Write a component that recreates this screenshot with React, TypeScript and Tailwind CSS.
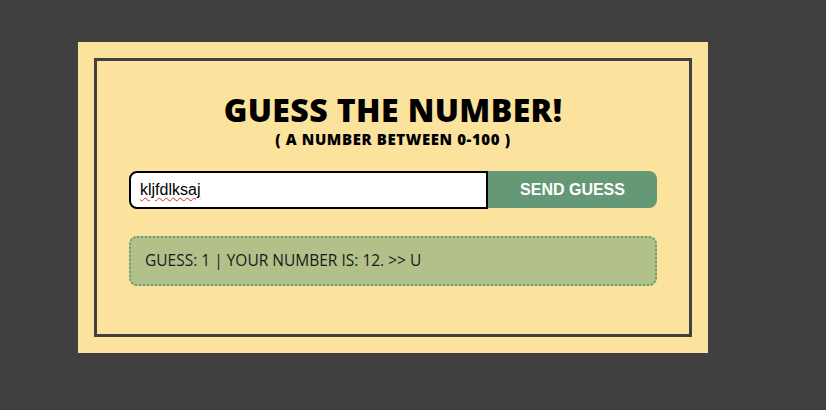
import React from "react";

export default function App() {
  return (
    <div className="min-h-[410px] w-full bg-[#404040] pt-[42px] pl-[78px] font-['Open_Sans',sans-serif]">
      <div className="w-[630px] h-[311px] bg-[#fce39d] p-[16px]">
        <div className="h-full border-[3px] border-[#404040] px-[32px] pt-[30px]">
          <h1 className="text-center text-[32px] leading-[38px] font-extrabold text-black tracking-[0.4px]">
            GUESS THE NUMBER!
          </h1>
          <p className="text-center text-[15px] leading-[20px] font-extrabold text-black tracking-[0.6px]">
            ( A NUMBER BETWEEN 0-100 )
          </p>
          <div className="mt-[22px] flex h-[38px]">
            <div className="w-[359px] h-[38px] rounded-l-[8px] border-2 border-black bg-white px-[9px] flex items-center font-['Liberation_Sans',Arial,sans-serif] text-[16px] text-black">
              <span className="underline decoration-wavy decoration-[#e0282e] decoration-1 underline-offset-[2px]">
                kljfdlksaj
              </span>
            </div>
            <button className="flex-1 h-[37px] rounded-r-[8px] bg-[#659876] text-white text-[16px] font-bold font-['Liberation_Sans',Arial,sans-serif]">
              SEND GUESS
            </button>
          </div>
          <div className="mt-[27px] h-[50px] rounded-[8px] border-2 border-dotted border-[#6a9a78] bg-[#b2c08a] px-[14px] flex items-center text-[15.5px] text-[#1a1a1a]">
            GUESS: 1 | YOUR NUMBER IS: 12. &gt;&gt; U
          </div>
        </div>
      </div>
    </div>
  );
}
